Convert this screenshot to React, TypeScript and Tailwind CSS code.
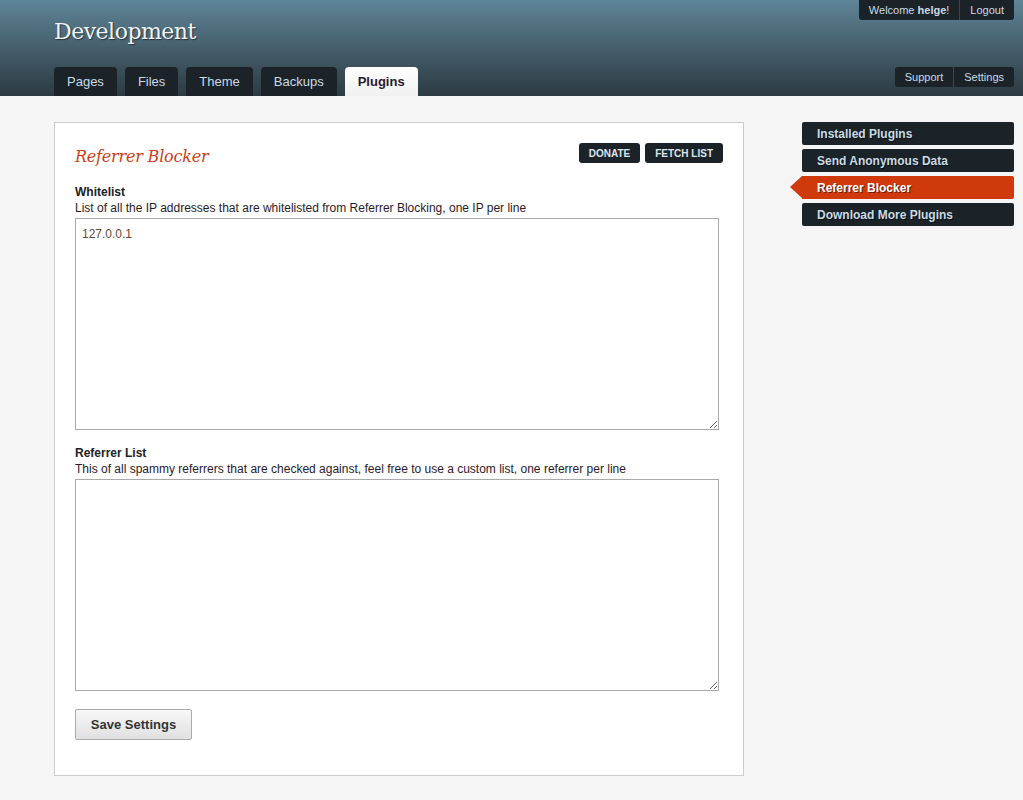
import * as React from 'react'
import { clsx } from 'clsx'

const tabs = ['Pages', 'Files', 'Theme', 'Backups', 'Plugins']
const activeTab = 'Plugins'

const sideItems = ['Installed Plugins', 'Send Anonymous Data', 'Referrer Blocker', 'Download More Plugins']
const activeSide = 'Referrer Blocker'

function Field({ label, help, value }: { label: string; help: string; value: string }) {
  return (
    <div className="flex flex-col">
      <div className="text-[12px] font-bold leading-[15px] text-[#222]">{label}</div>
      <div className="text-[12px] leading-[16px] text-[#2a1a2a]">{help}</div>
      <textarea
        defaultValue={value}
        className="mt-[2px] h-[212px] w-[644px] resize-y border border-[#a9a9a9] bg-white px-[6px] py-[7px] text-[12px] leading-[16px] text-[#5c4a3a] outline-none"
      />
    </div>
  )
}

export default function App() {
  return (
    <div className="min-h-[800px] bg-[#f5f5f5] font-['Liberation_Sans',Arial,sans-serif]">
      {/* Header */}
      <div className="h-[96px] bg-gradient-to-b from-[#5f8598] to-[#2d3b43]">
        <div className="relative flex h-full flex-col justify-between pl-[54px] pr-[9px]">
          <div className="flex items-start justify-between">
            <div className="pt-[18px] font-['DejaVu_Serif',Georgia,serif] text-[22px] leading-[28px] tracking-[-0.5px] text-[#f0f2f4] [text-shadow:1px_1px_1px_rgba(0,0,0,0.5)]">
              Development
            </div>
            <div className="flex h-[20px] overflow-hidden rounded-b-[3px] bg-[#1b2329] text-[11px] text-[#c9dbe6]">
              <div className="flex items-center px-[10px]">
                Welcome&nbsp;<span className="font-semibold">helge</span>!
              </div>
              <div className="w-px bg-[#3a4a54]" />
              <div className="flex items-center px-[10px]">Logout</div>
            </div>
          </div>
          <div className="flex items-end justify-between">
            <div className="flex gap-[8px]">
              {tabs.map((t) => (
                <div
                  key={t}
                  className={clsx(
                    'flex h-[29px] items-center rounded-t-[4px] px-[13px] text-[13px]',
                    t === activeTab
                      ? 'bg-gradient-to-b from-white to-[#f0f0f0] font-bold text-[#2a1a2a]'
                      : 'bg-[#1b2329] text-[#c9dbe6]'
                  )}
                >
                  {t}
                </div>
              ))}
            </div>
            <div className="mb-[9px] flex h-[20px] overflow-hidden rounded-[3px] bg-[#1b2329] text-[11px] text-[#c9dbe6]">
              <div className="flex items-center px-[10px]">Support</div>
              <div className="w-px bg-[#3a4a54]" />
              <div className="flex items-center px-[10px]">Settings</div>
            </div>
          </div>
        </div>
      </div>

      {/* Body */}
      <div className="flex items-start justify-between pl-[54px] pr-[9px] pt-[26px]">
        <div className="w-[690px] border border-[#cccccc] bg-white px-[20px] pb-[35px] pt-[20px]">
          <div className="flex items-center justify-between">
            <div className="pt-[2px] font-['DejaVu_Serif',Georgia,serif] text-[16px] italic leading-[24px] tracking-[-0.2px] text-[#c8401a]">
              Referrer Blocker
            </div>
            <div className="flex gap-[5px] self-start">
              <button className="h-[20px] rounded-[3px] bg-[#1b2329] px-[10px] text-[10px] font-bold text-[#dde6ec]">DONATE</button>
              <button className="h-[20px] rounded-[3px] bg-[#1b2329] px-[10px] text-[10px] font-bold text-[#dde6ec]">FETCH LIST</button>
            </div>
          </div>

          <div className="mt-[16px] flex flex-col gap-[16px]">
            <Field
              label="Whitelist"
              help="List of all the IP addresses that are whitelisted from Referrer Blocking, one IP per line"
              value="127.0.0.1"
            />
            <Field
              label="Referrer List"
              help="This of all spammy referrers that are checked against, feel free to use a custom list, one referrer per line"
              value=""
            />
          </div>

          <button className="mt-[18px] h-[31px] w-[117px] rounded-[2px] border border-[#aaaaaa] bg-gradient-to-b from-[#f8f8f8] to-[#e0e0e0] text-[13px] font-bold text-[#333]">
            Save Settings
          </button>
        </div>

        {/* Sidebar */}
        <div className="flex w-[212px] flex-col gap-[4px]">
          {sideItems.map((s) => (
            <div key={s} className="relative">
              {s === activeSide && (
                <div className="absolute left-[-12px] top-0 h-0 w-0 border-y-[11.5px] border-r-[12px] border-y-transparent border-r-[#d0390b]" />
              )}
              <div
                className={clsx(
                  'flex h-[23px] items-center rounded-[2px] px-[15px] text-[12px] font-bold [text-shadow:1px_1px_0_rgba(0,0,0,0.5)]',
                  s === activeSide ? 'rounded-l-none bg-[#d0390b] text-white' : 'bg-[#1b2329] text-[#c9dbe6]'
                )}
              >
                {s}
              </div>
            </div>
          ))}
        </div>
      </div>
    </div>
  )
}
